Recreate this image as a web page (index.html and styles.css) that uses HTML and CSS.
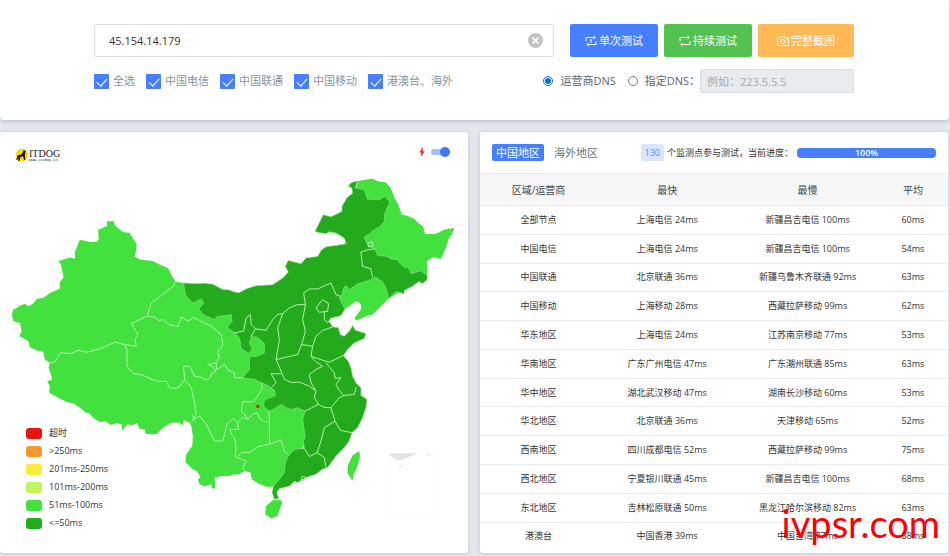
FILE: index.html
```html
<!DOCTYPE html>
<html lang="zh-CN">
<head>
  <meta charset="UTF-8" />
  <meta name="viewport" content="width=device-width, initial-scale=1.0"/>
  <title>ITDOG Ping</title>
  <link rel="stylesheet" href="styles.css">
</head>
<body>
  <header class="search-card">
    <form class="search-form">
      <div class="search-row">
        <div class="host-box">
          <input type="text" class="host-input" aria-label="Host" value="45.154.14.179" />
          <button type="button" class="clear-btn" aria-label="Clear">
            <svg width="15" height="15" viewBox="0 0 15 15"><circle cx="7.5" cy="7.5" r="7.5" fill="#c2c2c2"/><path d="M4.5 4.5l6 6M10.5 4.5l-6 6" stroke="#fff" stroke-width="1.7"/></svg>
          </button>
        </div>
        <div class="actions">
          <button type="button" class="btn btn-blue">
            <svg class="icon" viewBox="0 0 12 12"><path d="M1 6V2.500h8.500M8.500.8l1.700 1.700-1.700 1.700M11 6v3.500H2.500M3.500 7.800L1.800 9.500l1.700 1.700M5 5.200l1.200-.6V7.800"/></svg>单次测试
          </button>
          <button type="button" class="btn btn-green">
            <svg class="icon" viewBox="0 0 12 12"><path d="M1 6V2.500h9M8.500.8l1.700 1.700-1.700 1.700M11 6v3.500H2M3.500 7.800L1.800 9.500l1.700 1.700"/></svg>持续测试
          </button>
          <button type="button" class="btn btn-orange">
            <svg class="icon" viewBox="0 0 12 12"><path d="M.6 3.200h2.600L4.300 1.500h3.400l1.100 1.700h2.600v7.300H.6z"/><circle cx="6" cy="6.600" r="2.100"/></svg>完整截图
          </button>
        </div>
      </div>
      <div class="option-row">
        <div class="checks">
          <label><input type="checkbox" class="check" checked />全选</label>
          <label><input type="checkbox" class="check" checked />中国电信</label>
          <label><input type="checkbox" class="check" checked />中国联通</label>
          <label><input type="checkbox" class="check" checked />中国移动</label>
          <label><input type="checkbox" class="check" checked />港澳台、海外</label>
        </div>
        <div class="dns">
          <label><input type="radio" class="radio" name="dns" checked />运营商DNS</label>
          <label><input type="radio" class="radio" name="dns" />指定DNS：</label>
          <input type="text" class="dns-input" aria-label="DNS" placeholder="例如：223.5.5.5" disabled />
        </div>
      </div>
    </form>
  </header>

  <main class="panels">
    <section class="panel map-panel">
      <svg class="logo" viewBox="0 0 46 14" role="img" aria-label="ITDOG">
        <circle cx="7" cy="7" r="6.2" fill="#fbd908"/>
        <path d="M9 1.500l.8 1.300 1.400.4-1 1.200-.3 2.600.4 5H9L8.300 8.500 5.500 8.800 4.300 13H3l.7-4L2.200 12H1.200l1.300-4.500L6.500 6.200 8 4z" fill="#181818"/>
        <text x="14" y="9" class="logo-name">ITDOG</text>
        <text x="14" y="13" class="logo-url">www.itdog.cn</text>
      </svg>
      <label class="fast-toggle">
        <svg width="6" height="10" viewBox="0 0 6 10"><path d="M3.800 0L.3 5.500h2L1.800 10l4-5.800H3.600z" fill="#f0282d"/></svg>
        <input type="checkbox" class="switch" aria-label="Fast mode" checked />
      </label>

      <svg class="map" viewBox="0 132 469 422">
        <!-- whole country -->
        <path class="low" d="M12 315.700L13 310 16 309 20 306 25 304 28.300 306.700 32.700 304.300 37 299 43.300 298.300 50 293.300 60 289V282.300L63.700 277.700 61.300 265.700 58.700 261.300 70 257.700 75.300 259 74.700 253.300 80 240 90.700 242.300H96.700L99 240 98.300 230.300 107.300 226V221.500H114L115.300 226 123.300 232.300 130 233.300 133.300 239 137 244.300 136.300 251 135 256.700 140 259.700 153.300 261.300 161.700 265.700 168.300 268.300 171.700 275 175.700 281.700 182.700 283 193.300 284 213.300 284.700 223.300 290 239.300 293.300 256.700 286 290 290 345 245 358.700 181 373.300 178.700 378 181 386.700 182.700 391.700 188.300 395.700 199 399.300 205 402.700 215 408 216 415 219 419 223 424 226.700 426 234.300 436.700 234.300 445 230 455.300 228.300 452.700 235 450 238 446.700 248.300 441.700 259.300 434 257.300 427.700 261.700 428.300 275 389.300 299 381.700 306.700 373.300 315 369 316 363.300 318.300 356.700 321 355.300 318.300 361.700 310 362 306 360.700 303.300 356.700 301.700 350 306.700 345.700 309.300 310 312 320 340 330 400 280 489 274 487.300 268.300 487.700 260 485 252.300 480 251 473.300 245 471.700 240 475 235 475 230 476.700 223.300 476.700 215 478.300 215.700 489.300H212.300L211.700 485 205 487.300 200 485 198.300 480 201 478 197.300 471.700 193 470 188.300 465 185.700 463.300 186.700 455 192.700 446.700 193.300 436.700 191.700 426.700 190 423.300 184.300 420.700 183.300 426 179 423 171.700 423.300 163.300 428.300 157.300 434.700 146 435 145.300 430 140 429.300 137.300 423.300 133 426 128.300 425 125 428 122.700 431.700 121.700 425 117 424 111.700 425.700 106 422 100 422.700 93.300 418.300 90 414 86 413 80 408.300 74 404 66.700 402.700 56.700 397.300 49.300 393.300 50 387 47.300 381.700 52.300 380 51 375 48.700 368.300 50 363.300 45 360 43.300 352.300 37 351 30 347.700 28.300 341.700 24 339 19.300 336.700 21.700 331.700 20 323.300 13.300 321.700z"/>
        <path class="low" d="M266.700 506.700L273.300 501 281.700 500.700 282.700 504 280 511 278.300 516.700 271.700 519.300 265.700 515zM360 451.700L360.700 456.700 358 468 354 476 353.300 481.700 348.300 474 348.300 467 353.300 456z"/>
        <!-- provinces at 50ms or less -->
        <path class="fast" d="M184 283.300L193.300 284 205 283.500 213.300 284.700 223.300 290 229 290 234 292 239.300 293.300 247 289 256.700 286 273.300 285 283.300 278.300 289 272.300 286 266.700 288.700 260.700 301.700 264 306.700 258.300 318.300 256.700 322.300 250 327 247 336.700 245.700 347.300 244 345 238.300 336.700 233.300 330 232 326.700 234 319.300 232.700 315.700 231.700 324 215 331.700 217 342.700 211.700V206.700L347.300 198.300 353.300 193.300 352.700 188.300 349 186 352.700 182.300 358.700 181 356 187.700 365 190 368.300 199.300 380 200 386 196.700 390.700 202.300 385.700 213.300 385 221.700 380 227.700 378 228 365 237.700 369.300 246.700 375.700 249 378.300 255.700 388.300 256.700 391 259 398.300 260 402 265 406.700 268.300 409 267 411.700 274 421.700 271 428.300 276 428 280 423.300 284 420 281.700 413.300 286.700 405 291 405 294.300 396.700 291.700 389.300 299 388 293 386.700 288.300 383.300 281.700 380 280 376 277.300 371.700 280 358.300 284.300 349.300 290.700 348 287 345 286.700 342.700 295 340 298.300 343.300 305 345.700 309.300 341.700 316 336.700 317.300 332 318.300 330 321.700 333.300 327.300 339 328 341 335 345 336.700 350 331.700 353.300 326 356 330.700 366.700 334 365 339 355 343.300 348.300 350 344 356 349 361.700 351.700 368.300 353.300 376.700 357 384 361.700 388.300V396L367.700 400 366.700 408.300 363.300 418.300 358.300 428.300 352.700 433.300 350 441.700 345 448.300 336.700 456.700 328.300 468.300 323 470 316.700 475 306.700 478.300 298.300 483.300 295 482 290 487 280 489.300 277.300 493.300 279.300 499.300 275 500 272.700 493.300 274 487.300 280 480 285 473.300 286 463.300 289.300 456 295 450 305 449.300 304 441.700 306 438 305 431.700 303.300 420 305.700 411.700 298.300 408.300 292 410 286.700 408.300 281.700 405 275 409.300 270 411.700 264 406.700 265 400.700 276 396 275 390.700 266.700 385 261.700 383.300 256 380 250 379.300 243.300 378.300 250 370 250 356.700 257 357 265 353.300V344L258 338 251.700 336.700 250 343.300 252.700 350 249.300 354 241.700 349.300 240 338.300 235 333.300 227.700 327.300 232.700 321.700 231.700 315 216.700 317.300 215 320 203.300 315 199.300 309.300 204 303.300 201.700 299.300 193.300 303.300 185.700 295z"/>
        <!-- province borders -->
        <g class="border">
          <path d="M175.700 281.700L174 286.700 166.700 291.700 158.300 298.300 151.700 303.300 147.300 316.700 131.700 324 134 328 138.300 335 135 340 136.700 346.700 125 345 115 342.700 100 349.300 86.700 352.700 78.300 350.700 71.700 354 60.700 353.300 55 362.300 50 363.300"/>
          <path d="M147.300 316.700L155 317.300 159 321 163.300 320 169 325 178.300 326.700 181.700 317.300 188.300 321.700 194 318 200 321 211.700 326.700 221.700 335 223.300 345 218 353 220 358 216.700 363.300 208.300 365 213 367 216.700 371.700 211.700 374 211 378 206.700 380.700 202 378 195 376.700 190 366.700 184 366.700 185 380 180 387.300 176 389 170 388.300 166.700 381.700 159 382 150 379 141 375 133.300 374 127.300 366.700V350L125 345"/>
          <path d="M185 380L191.700 388.300 195 403.300 196.700 415 191.700 423M216.700 363.300L217 370 220 368.300 225 365 229 371 235 373.300V378.300L243.300 378.300M193 416L195 420 200 416.700 206.700 425 215 441.700 223.300 441.700 227.300 425 233.300 419.300 238.300 423.300 243 418 248.300 420 245 415 241.700 411.700 243.300 402.300 253.300 402.700 257.300 398.300 263.300 388.300 261.700 383.300"/>
          <path d="M248.300 420L254 414 258.300 414 260 419 266.700 423.300 270 421.700 269.300 411.700M238.300 423.300L239 430 230 430 232 435 235 438.300 236.700 448.300 235.700 457.300M238.300 457L243 453 250 453.300 259 447 270 445V423M235.700 457.300L246.700 461.700 243.300 468.300 245 471.700M270 445L281.700 440.700 285 451.700 289.300 456"/>
          <path d="M375.700 249L369 250 361.700 252.300 363.300 266.700 371.700 269 373.300 277.700M341.700 296.700L336.700 295 331.700 283.300 318.300 289.300 310 289.300 304.300 293.300 306 305 303.300 320 306 331.700 302.300 345 313.300 346.700 316.700 336.700 323 331 333.300 327.300M306 305L298 305 290 308.300 283.300 314 278.300 328.300 280 340 276.700 360 298.300 355 302.300 345"/>
          <path d="M283.300 314L278 315 273.300 320 266.700 330.700 256 329.300 251.700 336.700M235 333.300L244 331.700 246.700 318.300 251 315 251.700 325 256 329.300M316.700 308.300L323.300 300 329.300 304 328.300 311.700 320 312.700zM325 312L325 320 328.300 323.300 332 318.300"/>
          <path d="M276.700 360L281.700 371.700 285 380 292 383 300 382.700 310 386.700 316.700 391.700 311.700 383.300 310 375 316.700 370 323.300 366.700 316 362 311.700 356.700 313.300 346.700M311.700 356.700L323.300 360.700 330 362.700 344 356M326.700 363.300L335 373.300 336 379 341.700 378.300 336.700 385 340 391 345 396.700"/>
          <path d="M281.700 374.300H271.700L276.700 383.300 271.700 388.300M316.700 391.700L315 398 319 405 305.700 411.700M319 405L325 408 331.700 408.300 340 398.300 345 396 355 395 357 388M331.700 408.300L335.700 421.700 341 431 352.700 433.300M335.700 421.700L325 428.300 321.700 441.700 317.700 453.300M305 449.300L310 457.300 317.700 453.300 325 458.300 326.700 468.300M302 478L305 477 307 480 302 482z"/>
          <path d="M369 243L373 242 374 246 369 247z"/>
        </g>
        <circle cx="258.3" cy="407" r="1.7" fill="#e9150f"/>
        <path d="M391 455H435V518H391z" fill="none" stroke="#f9f9f9"/>
        <path d="M391 456l1-2h26l-8 4-8 3-5 0zM399 468l4-3-1 3zM428 455l3 0-1 2zM426 476l1 2z" fill="#e4e4e4"/>
      </svg>

      <ul class="legend">
        <li><i class="swatch timeout"></i>超时</li>
        <li><i class="swatch over250"></i>&gt;250ms</li>
        <li><i class="swatch to250"></i>201ms-250ms</li>
        <li><i class="swatch to200"></i>101ms-200ms</li>
        <li><i class="swatch to100"></i>51ms-100ms</li>
        <li><i class="swatch to50"></i>&lt;=50ms</li>
      </ul>
    </section>

    <section class="panel result-panel">
      <div class="result-head">
        <div class="tabs">
          <button type="button" class="tab active">中国地区</button>
          <button type="button" class="tab">海外地区</button>
        </div>
        <div class="status">
          <span class="count">130</span>
          <span>个监测点参与测试，当前进度：</span>
        </div>
        <div class="progress" role="progressbar" aria-valuenow="100"><div class="bar" style="width: 100%">100%</div></div>
      </div>
      <div class="table-wrap">
        <table class="result-table">
          <thead>
            <tr><th>区域/运营商</th><th>最快</th><th>最慢</th><th>平均</th></tr>
          </thead>
          <tbody>
            <tr><td>全部节点</td><td>上海电信 24ms</td><td>新疆昌吉电信 100ms</td><td>60ms</td></tr>
            <tr><td>中国电信</td><td>上海电信 24ms</td><td>新疆昌吉电信 100ms</td><td>54ms</td></tr>
            <tr><td>中国联通</td><td>北京联通 36ms</td><td>新疆乌鲁木齐联通 92ms</td><td>63ms</td></tr>
            <tr><td>中国移动</td><td>上海移动 28ms</td><td>西藏拉萨移动 99ms</td><td>62ms</td></tr>
            <tr><td>华东地区</td><td>上海电信 24ms</td><td>江苏南京移动 77ms</td><td>53ms</td></tr>
            <tr><td>华南地区</td><td>广东广州电信 47ms</td><td>广东潮州联通 85ms</td><td>63ms</td></tr>
            <tr><td>华中地区</td><td>湖北武汉移动 47ms</td><td>湖南长沙移动 60ms</td><td>53ms</td></tr>
            <tr><td>华北地区</td><td>北京联通 36ms</td><td>天津移动 65ms</td><td>52ms</td></tr>
            <tr><td>西南地区</td><td>四川成都电信 52ms</td><td>西藏拉萨移动 99ms</td><td>75ms</td></tr>
            <tr><td>西北地区</td><td>宁夏银川联通 45ms</td><td>新疆昌吉电信 100ms</td><td>68ms</td></tr>
            <tr><td>东北地区</td><td>吉林松原联通 50ms</td><td>黑龙江哈尔滨移动 82ms</td><td>63ms</td></tr>
            <tr><td>港澳台</td><td>中国香港 39ms</td><td>中国台湾 77ms</td><td>58ms</td></tr>
          </tbody>
        </table>
      </div>
      <div class="watermark">ivpsr.com</div>
    </section>
  </main>
</body>
</html>
```

FILE: styles.css
```css
* {
  box-sizing: border-box;
}
body {
  margin: 0;
  padding-right: 1px;
  background-color: #e4e9ee;
  color: #333;
  font-family: "Open Sans", "Noto Sans CJK SC", sans-serif;
  font-size: 11px;
  line-height: 16px;
}
button, input {
  font: inherit;
  margin: 0;
}
button {
  border: none;
  padding: 0;
  cursor: pointer;
}

/* search */
.search-card {
  background-color: #fff;
  padding: 24px 17px 27px 16px;
  border-radius: 0 0 4px 4px;
  box-shadow: 0 1px 5px rgba(80,100,130,0.35);
}
.search-form {
  max-width: 760px;
  margin: 0 auto;
}
.search-row {
  display: flex;
  gap: 16px;
}
.host-box {
  flex: 1;
  display: flex;
  align-items: center;
  height: 33px;
  padding: 0 10px 0 14px;
  border: 1px solid #dedede;
  border-radius: 2px;
}
.host-input {
  flex: 1;
  min-width: 0;
  padding: 0;
  border: none;
  outline: none;
  color: #333;
}
.clear-btn {
  display: flex;
  background: none;
}
.actions {
  display: flex;
  gap: 6px;
}
.btn {
  display: flex;
  align-items: center;
  gap: 2px;
  height: 33px;
  padding: 0 15px;
  border-radius: 2px;
  color: #fff;
}
.btn-blue {
  background-color: #467fff;
}
.btn-green {
  background-color: #53c250;
}
.btn-orange {
  background-color: #ffb957;
  padding: 0 19px;
}
.icon {
  width: 12px;
  height: 12px;
  fill: none;
  stroke: #fff;
}
.option-row {
  display: flex;
  justify-content: space-between;
  align-items: center;
  margin-top: 12px;
}
.checks, .dns, .checks label, .dns label {
  display: flex;
  align-items: center;
}
.checks {
  gap: 11px;
  color: #8a939c;
}
.checks label {
  gap: 4px;
}
.check {
  appearance: none;
  display: flex;
  justify-content: center;
  width: 15px;
  height: 15px;
  border-radius: 1px;
  background-color: #467fff;
}
.check::after {
  content: "";
  width: 5px;
  height: 9px;
  margin-top: 2px;
  border: solid #fff;
  border-width: 0 1px 1px 0;
  transform: rotate(42deg);
}
.dns {
  color: #5b6470;
}
.dns label {
  gap: 7px;
  margin-right: 12px;
}
.dns label + label {
  margin-right: 0;
}
.radio {
  width: 10px;
  height: 10px;
  accent-color: #0f6cd0;
}
.dns-input {
  width: 154px;
  height: 24px;
  padding: 0 6px;
  border: 1px solid #d9dde1;
  border-radius: 2px;
  background-color: #e9ecef;
}
.dns-input::placeholder {
  color: #a3abb3;
}

/* panels */
.panels {
  display: grid;
  grid-template-columns: 1fr 1fr;
  gap: 12px;
  padding: 12px 1px 2px 0;
}
.panel {
  position: relative;
  background-color: #fff;
  border-radius: 3px;
  box-shadow: 0 1px 5px rgba(80,100,130,0.25);
}
.map {
  display: block;
  width: 100%;
}
.low {
  fill: #43e13d;
}
.fast {
  fill: #24aa1d;
  stroke: #8fe489;
  stroke-width: 0.6;
}
.border path {
  fill: none;
  stroke: #b2f2ac;
  stroke-linejoin: round;
}
.logo {
  position: absolute;
  top: 16px;
  left: 15px;
  width: 46px;
  height: 14px;
}
.logo-name {
  font-family: "Liberation Serif", serif;
  font-size: 10px;
  fill: #222;
}
.logo-url {
  font-family: "Liberation Mono", monospace;
  font-size: 4px;
  fill: #333;
}
.fast-toggle {
  position: absolute;
  top: 15px;
  right: 18px;
  display: flex;
  align-items: center;
  gap: 6px;
}
.switch {
  appearance: none;
  display: flex;
  align-items: center;
  justify-content: flex-end;
  width: 19px;
  height: 10px;
  border-radius: 5px;
  background: linear-gradient(#a5c0ff, #a5c0ff) center / 100% 6px no-repeat;
}
.switch::after {
  content: "";
  width: 10px;
  height: 10px;
  border-radius: 50%;
  background-color: #3f78f5;
}
.legend {
  position: absolute;
  left: 26px;
  bottom: 21px;
  margin: 0;
  padding: 0;
  list-style: none;
  font-size: 9px;
  line-height: 18px;
}
.legend li {
  display: flex;
  align-items: center;
  gap: 7px;
}
.swatch {
  width: 16px;
  height: 11px;
  border-radius: 3px;
}
.timeout { background-color: #ea120d; }
.over250 { background-color: #f8982e; }
.to250 { background-color: #f7ec3c; }
.to200 { background-color: #bdf65e; }
.to100 { background-color: #43e13d; }
.to50 { background-color: #24aa1d; }

/* results */
.result-panel {
  display: flex;
  flex-direction: column;
  padding-bottom: 3px;
}
.result-head {
  display: flex;
  align-items: center;
  height: 41px;
  padding: 0 12px;
}
.tabs {
  display: flex;
  gap: 6px;
  margin-right: auto;
}
.tab {
  height: 17px;
  padding: 0 4px;
  border-radius: 2px;
  background: none;
  color: #6b7480;
}
.tab.active {
  background-color: #467fff;
  color: #fff;
}
.status {
  display: flex;
  align-items: center;
  gap: 3px;
  font-size: 9px;
}
.count {
  padding: 0 4px;
  border-radius: 2px;
  background-color: #dae5ff;
  color: #5c8dfb;
  font-size: 9px;
  line-height: 17px;
}
.progress {
  width: 139px;
  margin-left: 4px;
  border-radius: 4px;
  background-color: #e9ecef;
}
.bar {
  border-radius: 4px;
  background-color: #467fff;
  color: #fff;
  font-size: 9px;
  font-weight: 600;
  line-height: 10px;
  text-align: center;
}
.table-wrap {
  flex: 1;
}
.result-table {
  width: 100%;
  height: 100%;
  table-layout: fixed;
  border-collapse: collapse;
  text-align: center;
  font-size: 9px;
}
.result-table th {
  height: 32px;
  padding: 0;
  background-color: #f6f6f6;
  border-top: 1px solid #ececec;
  color: #3c454e;
  font-size: 10px;
  font-weight: normal;
}
.result-table th:nth-child(1) { width: 25%; }
.result-table th:nth-child(2) { width: 30%; }
.result-table th:nth-child(3) { width: 30%; }
.result-table td {
  padding: 0;
  border-top: 1px solid #e9ecef;
}
.watermark {
  position: absolute;
  right: 8px;
  bottom: 10px;
  color: #fb0007;
  font-family: Lato, sans-serif;
  font-size: 38px;
  line-height: 40px;
}
```
